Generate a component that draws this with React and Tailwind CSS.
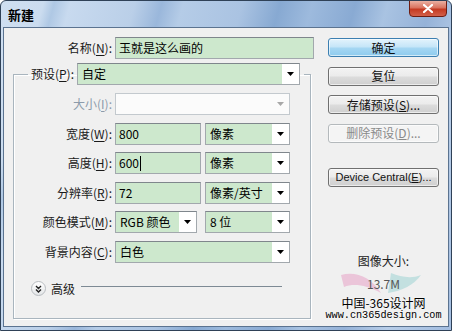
import { useState } from "react";

const Acc = ({ text, acc, disabled }) => (
  <span className={disabled ? "text-[#8c9bab]" : "text-[#1a1a1a]"}>
    {text}(<span className="underline underline-offset-[2px]">{acc}</span>):
  </span>
);

const Arrow = ({ disabled }) => (
  <svg width="7" height="4" viewBox="0 0 7 4">
    <path d="M0 0h7L3.5 4z" fill={disabled ? "#a8a8a8" : "#000"} />
  </svg>
);

const TextBox = ({ value, width, caret }) => (
  <div
    className={`${width} h-[22px] flex items-center pl-[3px] bg-[#cde8cd] border border-[#a2a8ad] border-t-[#7f868c] text-[12px]`}
  >
    {value}
    {caret && <span className="w-[1px] h-[15px] bg-black ml-[1px]" />}
  </div>
);

const Combo = ({ value, width, disabled }) => (
  <div
    className={`${width} h-[22px] flex border ${
      disabled ? "border-[#c3c9ce] bg-[#fbfbfb]" : "border-[#a2a8ad] border-t-[#7f868c] bg-white"
    }`}
  >
    <div className={`flex-1 flex items-center pl-[4px] text-[12px] ${disabled ? "" : "bg-[#cde8cd]"}`}>
      {value}
    </div>
    <div className="w-[17px] flex items-center justify-center">
      <Arrow disabled={disabled} />
    </div>
  </div>
);

const Row = ({ label, children }) => (
  <div className="flex items-center h-[22px]">
    <div className="w-[98px] text-right text-[12px]">{label}</div>
    <div className="ml-[3px] flex gap-[4px]">{children}</div>
  </div>
);

const VistaButton = ({ children, primary, disabled }) => {
  let cls =
    "border-[#707070] bg-[linear-gradient(#f3f3f3_0%,#ebebeb_48%,#dcdcdc_52%,#cfcfcf_100%)] text-[#111]";
  if (primary)
    cls =
      "border-[#3c7fb1] bg-[linear-gradient(#e3f3fc_0%,#c4e5f8_48%,#a6d7f3_52%,#8ecbee_100%)] text-[#111]";
  if (disabled) cls = "border-[#b4b9bc] bg-[#f4f4f4] text-[#8a8a8a]";
  return (
    <button
      type="button"
      className={`w-[111px] h-[19px] rounded-[3px] border ${cls} text-[12px] leading-none flex items-center justify-center shadow-[inset_0_0_0_1px_rgba(255,255,255,0.6)]`}
    >
      {children}
    </button>
  );
};

export default function App() {
  const [advanced, setAdvanced] = useState(false);

  return (
    <div
      className="w-[452px] h-[331px] flex flex-col border border-[#2f4157] rounded-t-[6px] overflow-hidden bg-[linear-gradient(105deg,#cfdff1_0%,#cbdcef_8%,#afc8e4_10%,#c8daef_13%,#bacfe8_25%,#9ab7db_30%,#b5cce7_34%,#aac3e2_45%,#87a9d2_52%,#9dbadd_58%,#89aad3_66%,#a9c3e2_72%,#95b2d8_80%,#b7cde8_88%,#a3bde0_100%)]"
      style={{ fontFamily: '"Noto Sans CJK SC", "Noto Sans", sans-serif' }}
    >
      {/* Title bar */}
      <div className="h-[26px] flex justify-between pl-[7px] pr-[4px]">
        <span className="mt-[4px] text-[13px] font-bold text-black">新建</span>
        <button
          type="button"
          className="w-[38px] h-[17px] -mt-[1px] rounded-b-[4px] border border-[#6e1d12] bg-[linear-gradient(#eab0a2_0%,#d9735f_45%,#c53a22_55%,#d2604a_100%)] flex items-center justify-center"
        >
          <svg width="10" height="9" viewBox="0 0 10 9">
            <path d="M1 1l8 7M9 1L1 8" stroke="#fff" strokeWidth="2.2" strokeLinecap="round" />
          </svg>
        </button>
      </div>

      {/* Body */}
      <div className="flex-1 mx-[2px] mb-[3px] bg-[#f0f0f0] border border-[#5b7390] flex">
        {/* Left column */}
        <div className="w-[324px] pt-[9px] flex flex-col">
          <div className="flex items-center h-[22px]">
            <div className="w-[108px] text-right text-[12px]">
              <Acc text="名称" acc="N" />
            </div>
            <div className="ml-[3px]">
              <TextBox value="玉就是这么画的" width="w-[199px]" />
            </div>
          </div>

          <fieldset className="mt-[4px] ml-[9px] w-[298px] border border-[#a9b5be] shadow-[inset_1px_1px_0_#fff,1px_1px_0_#fff] pb-[22px]">
            <legend className="ml-[14px] flex items-center">
              <div className="w-[49px] text-right pr-[3px] text-[12px]">
                <Acc text="预设" acc="P" />
              </div>
              <Combo value="自定" width="w-[223px]" />
              <div className="w-[4px]" />
            </legend>

            <div className="pt-[8px] flex flex-col gap-[7.5px]">
              <Row label={<Acc text="大小" acc="I" disabled />}>
                <Combo value="" width="w-[175px]" disabled />
              </Row>
              <Row label={<Acc text="宽度" acc="W" />}>
                <TextBox value="800" width="w-[86px]" />
                <Combo value="像素" width="w-[85px]" />
              </Row>
              <Row label={<Acc text="高度" acc="H" />}>
                <TextBox value="600" width="w-[86px]" caret />
                <Combo value="像素" width="w-[85px]" />
              </Row>
              <Row label={<Acc text="分辨率" acc="R" />}>
                <TextBox value="72" width="w-[86px]" />
                <Combo value="像素/英寸" width="w-[85px]" />
              </Row>
              <Row label={<Acc text="颜色模式" acc="M" />}>
                <div className="w-[82px]">
                  <Combo value="RGB 颜色" width="w-[82px]" />
                </div>
                <div className="ml-[4px]">
                  <Combo value="8 位" width="w-[85px]" />
                </div>
              </Row>
              <Row label={<Acc text="背景内容" acc="C" />}>
                <Combo value="白色" width="w-[175px]" />
              </Row>
            </div>

            <div className="mt-[19px] ml-[17px] mr-[28px] h-[14px] flex items-center">
              <button
                type="button"
                onClick={() => setAdvanced(!advanced)}
                className="w-[15px] h-[15px] rounded-full border border-[#b8bcc0] bg-[linear-gradient(#ffffff,#e4e6e8)] flex items-center justify-center"
              >
                <svg width="7" height="8" viewBox="0 0 7 8">
                  <path d="M1 1l2.5 2.5L6 1M1 4.5L3.5 7 6 4.5" stroke="#222" strokeWidth="1.4" fill="none" />
                </svg>
              </button>
              <span className="ml-[5px] text-[12px] text-[#1a1a1a]">高级</span>
              <div className="ml-[6px] flex-1 h-[1px] bg-[#7d8a94] -mt-[4px]" />
            </div>
          </fieldset>
        </div>

        {/* Right column */}
        <div className="w-[111px] pt-[10px] flex flex-col items-center">
          <div className="flex flex-col gap-[9.5px]">
            <VistaButton primary>确定</VistaButton>
            <VistaButton>复位</VistaButton>
            <VistaButton>
              存储预设(<span className="underline">S</span>)...
            </VistaButton>
            <VistaButton disabled>
              删除预设(<span className="underline">D</span>)...
            </VistaButton>
          </div>
          <div className="mt-[25.5px]">
            <VistaButton>
              <span style={{ fontFamily: '"Liberation Sans", sans-serif' }} className="text-[11px]">
                Device Central(<span className="underline">E</span>)...
              </span>
            </VistaButton>
          </div>

          <div className="relative mt-[66px] w-full flex flex-col items-center">
            <svg
              className="absolute left-[8px] top-[14px] pointer-events-none"
              width="90"
              height="40"
              viewBox="0 0 90 40"
            >
              <path d="M5 8 C20 4 35 10 45 26 C30 18 18 16 8 20 Z" fill="#e7a9c9" opacity="0.6" />
              <path d="M55 6 C65 10 75 12 85 8 C78 18 66 24 52 26 Z" fill="#9fd3d3" opacity="0.55" />
            </svg>
            <span className="relative text-[12px] text-[#222] leading-[16px]">图像大小:</span>
            <span className="relative mt-[7px] text-[12px] text-[#555] leading-[16px]">13.7M</span>
            <span className="relative mt-[5px] text-[12px] text-black leading-[12px] [text-shadow:0_0_2px_#fff]">
              中国-365设计网
            </span>
            <span
              className="relative mt-[1px] text-[10.2px] text-black leading-[11px] whitespace-nowrap [text-shadow:0_0_2px_#fff]"
              style={{ fontFamily: '"Liberation Mono", monospace' }}
            >
              www.cn365design.com
            </span>
          </div>
        </div>
      </div>
    </div>
  );
}
